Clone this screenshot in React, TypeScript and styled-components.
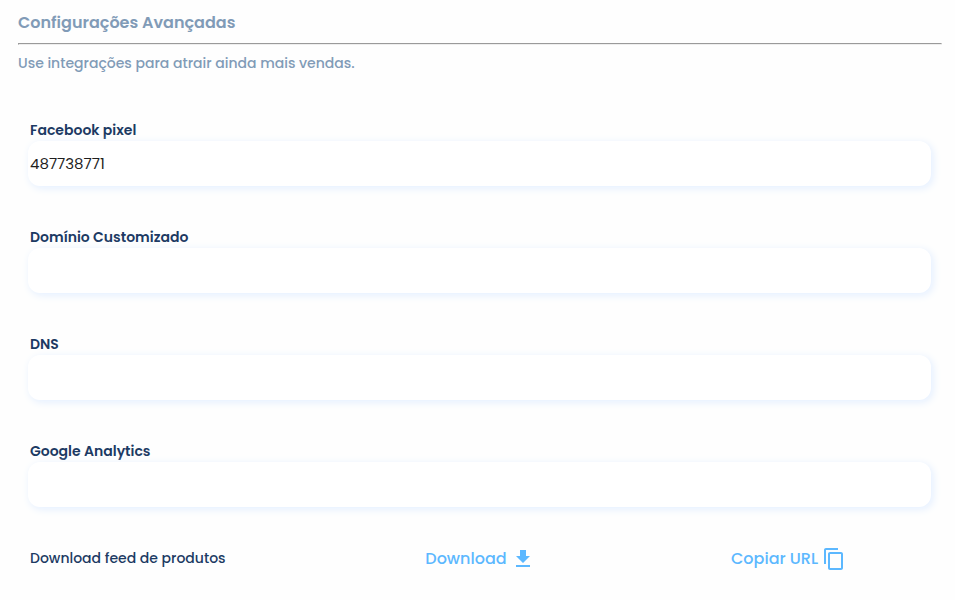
import React, { useId, useState } from "react";
import styled, { createGlobalStyle } from "styled-components";

const GlobalStyle = createGlobalStyle`
  * { box-sizing: border-box; }
  body {
    margin: 0;
    background: #fefefe;
    font-family: Poppins, Inter, sans-serif;
    color: #1c3a63;
  }
`;

const Page = styled.main`
  padding: 9px 13px 16px 18px;
`;

const Title = styled.h1`
  margin: 0;
  font-size: 16px;
  line-height: 28px;
  font-weight: 600;
  color: #819bb7;
`;

const Divider = styled.hr`
  margin: 6px 0;
  border: 1px inset #eeeeee;
`;

const Subtitle = styled.p`
  margin: 0;
  font-size: 14px;
  line-height: 24px;
  font-weight: 500;
  color: #819bb7;
`;

const Form = styled.form`
  display: flex;
  flex-direction: column;
  gap: 40px;
  margin: 44px 11px 0 10px;
`;

const Field = styled.div`
  display: flex;
  flex-direction: column;
`;

const Label = styled.label`
  padding-left: 2px;
  font-size: 14px;
  line-height: 22px;
  font-weight: 600;
`;

const Input = styled.input`
  width: 100%;
  height: 45px;
  padding: 1px 2px;
  border: 0;
  border-radius: 12px;
  outline: 0;
  background: #ffffff;
  box-shadow: 2px 2px 8px #e2eeff;
  font: inherit;
  font-size: 15px;
  color: #1f1f1f;
`;

const FeedRow = styled.div`
  display: grid;
  grid-template-columns: 44% 1fr 200px;
  align-items: start;
`;

const FeedLabel = styled.span`
  padding-left: 2px;
  font-size: 14px;
  line-height: 22px;
  font-weight: 500;
`;

const Action = styled.button`
  display: flex;
  align-items: flex-end;
  justify-self: start;
  gap: 4px;
  padding: 0;
  border: 0;
  background: none;
  font: inherit;
  font-size: 16px;
  line-height: 24px;
  font-weight: 500;
  color: #5cb8ff;
  cursor: pointer;
`;

const Icon = styled.svg`
  width: 24px;
  height: 24px;
  fill: currentColor;
`;

function TextField({ label, initial = "" }: { label: string; initial?: string }) {
  const id = useId();
  const [value, setValue] = useState(initial);
  return (
    <Field>
      <Label htmlFor={id}>{label}</Label>
      <Input id={id} type="text" value={value} onChange={(e) => setValue(e.target.value)} />
    </Field>
  );
}

export default function App() {
  return (
    <>
      <GlobalStyle />
      <Page>
        <Title>Configurações Avançadas</Title>
        <Divider />
        <Subtitle>Use integrações para atrair ainda mais vendas.</Subtitle>
        <Form onSubmit={(e) => e.preventDefault()}>
          <TextField label="Facebook pixel" initial="487738771" />
          <TextField label="Domínio Customizado" />
          <TextField label="DNS" />
          <TextField label="Google Analytics" />
          <FeedRow>
            <FeedLabel>Download feed de produtos</FeedLabel>
            <Action type="button">
              Download
              <Icon viewBox="0 0 24 24" aria-hidden="true">
                <path d="M19 9h-4V3H9v6H5l7 7 7-7zM5 18v2h14v-2H5z" />
              </Icon>
            </Action>
            <Action type="button">
              Copiar URL
              <Icon viewBox="0 0 24 24" aria-hidden="true">
                <path d="M16 1H4c-1.1 0-2 .9-2 2v14h2V3h12V1zm3 4H8c-1.1 0-2 .9-2 2v14c0 1.1.9 2 2 2h11c1.1 0 2-.9 2-2V7c0-1.1-.9-2-2-2zm0 16H8V7h11v14z" />
              </Icon>
            </Action>
          </FeedRow>
        </Form>
      </Page>
    </>
  );
}
